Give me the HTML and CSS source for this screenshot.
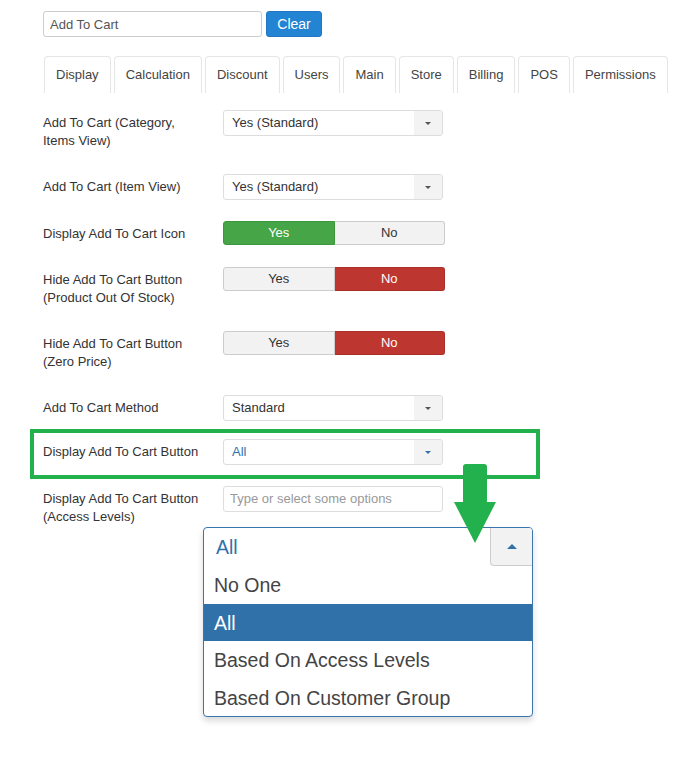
FILE: index.html
```html
<!DOCTYPE html>
<html lang="en">
<head>
  <meta charset="UTF-8">
  <meta name="viewport" content="width=device-width, initial-scale=1.0">
  <title>Add To Cart Options</title>
  <link rel="stylesheet" href="styles.css">
</head>

<body>
  <div class="page">
    <div class="search">
      <input class="search-input" type="text" value="Add To Cart">
      <button class="btn-clear">Clear</button>
    </div>

    <ul class="tabs">
      <li>Display</li>
      <li>Calculation</li>
      <li>Discount</li>
      <li>Users</li>
      <li>Main</li>
      <li>Store</li>
      <li>Billing</li>
      <li>POS</li>
      <li>Permissions</li>
    </ul>

    <div class="form">
      <div class="row">
        <div class="label">Add To Cart (Category,<br>Items View)</div>
        <div class="select"><span>Yes (Standard)</span><span class="select-arrow"><i class="caret"></i></span></div>
      </div>

      <div class="row">
        <div class="label">Add To Cart (Item View)</div>
        <div class="select"><span>Yes (Standard)</span><span class="select-arrow"><i class="caret"></i></span></div>
      </div>

      <div class="row">
        <div class="label">Display Add To Cart Icon</div>
        <div class="toggle">
          <span class="yes-on">Yes</span>
          <span class="off">No</span>
        </div>
      </div>

      <div class="row">
        <div class="label">Hide Add To Cart Button<br>(Product Out Of Stock)</div>
        <div class="toggle">
          <span class="off">Yes</span>
          <span class="no-on">No</span>
        </div>
      </div>

      <div class="row">
        <div class="label">Hide Add To Cart Button<br>(Zero Price)</div>
        <div class="toggle">
          <span class="off">Yes</span>
          <span class="no-on">No</span>
        </div>
      </div>

      <div class="row row-tight">
        <div class="label">Add To Cart Method</div>
        <div class="select"><span>Standard</span><span class="select-arrow"><i class="caret"></i></span></div>
      </div>

      <div class="row highlight">
        <div class="label">Display Add To Cart Button</div>
        <div class="select active"><span>All</span><span class="select-arrow"><i class="caret"></i></span></div>
      </div>

      <div class="row">
        <div class="label">Display Add To Cart Button<br>(Access Levels)</div>
        <div class="multi">Type or select some options</div>
      </div>
    </div>

    <!-- enlarged view of the open dropdown -->
    <div class="dropdown">
      <div class="dropdown-head">
        <span>All</span>
        <span class="dropdown-btn"><i class="caret-up"></i></span>
      </div>
      <ul class="dropdown-list">
        <li>No One</li>
        <li class="selected">All</li>
        <li>Based On Access Levels</li>
        <li>Based On Customer Group</li>
      </ul>
    </div>

    <svg class="pointer" width="50" height="90" viewBox="0 0 50 90">
      <rect x="13" y="4" width="24" height="40" rx="3" fill="#22b14c"/>
      <polygon points="4,42 46,42 25,83" fill="#22b14c"/>
    </svg>
  </div>
</body>
</html>
```

FILE: styles.css
```css
body {
  margin: 0;
  font-family: "Liberation Sans", Arial, sans-serif;
  font-size: 13px;
  color: #333;
  background: #fff;
}

.page {
  position: relative;
  width: 689px;
  height: 770px;
  padding: 11px 0 0 43px;
  box-sizing: border-box;
}

.search {
  display: flex;
  gap: 4px;
}

.search-input {
  width: 219px;
  height: 26px;
  box-sizing: border-box;
  padding: 0 6px;
  border: 1px solid #ccc;
  border-radius: 3px;
  font-family: inherit;
  font-size: 13px;
  color: #555;
}

.btn-clear {
  width: 56px;
  height: 26px;
  padding: 0;
  border: 1px solid #1f78c1;
  border-radius: 3px;
  background: #2384d3;
  color: #fff;
  font-family: inherit;
  font-size: 14px;
}

.tabs {
  display: flex;
  list-style: none;
  margin: 19px 0 0 1px;
  padding: 0;
}

.tabs li {
  height: 36px;
  line-height: 36px;
  padding: 0 11px;
  margin-right: 3px;
  border: 1px solid #e6e6e6;
  border-bottom: none;
  border-radius: 4px 4px 0 0;
  color: #444;
}

.form {
  margin-top: 17px;
}

.row {
  display: flex;
  align-items: flex-start;
  margin-bottom: 21px;
}

.row-tight {
  margin-bottom: 8px;
}

.label {
  width: 180px;
  padding: 4px 0 3px;
  line-height: 18px;
}

.select {
  display: flex;
  width: 220px;
  height: 26px;
  box-sizing: border-box;
  border: 1px solid #ddd;
  border-radius: 3px;
  line-height: 24px;
  overflow: hidden;
}

.select span:first-child {
  flex: 1;
  padding-left: 8px;
}

.select-arrow {
  width: 28px;
  background: #f3f3f3;
  display: flex;
  align-items: center;
  justify-content: center;
}

.caret {
  border-left: 3.5px solid transparent;
  border-right: 3.5px solid transparent;
  border-top: 3.5px solid #555;
}

.select.active span:first-child {
  color: #3071a9;
}

.select.active .caret {
  border-top-color: #3071a9;
}

.toggle {
  display: flex;
  width: 222px;
  height: 24px;
  line-height: 22px;
  text-align: center;
}

.toggle span {
  flex: 1;
  border: 1px solid #ccc;
}

.toggle span:first-child {
  border-radius: 3px 0 0 3px;
}

.toggle span:last-child {
  border-radius: 0 3px 3px 0;
  border-left: none;
}

.toggle .off {
  background: #f2f2f2;
  color: #333;
}

.toggle .yes-on {
  background: #46a546;
  border-color: #3d953e;
  color: #fff;
}

.toggle .no-on {
  background: #bd362f;
  border-color: #a9302a;
  color: #fff;
}

.highlight {
  width: 510px;
  box-sizing: border-box;
  margin: 0 0 7px -13px;
  padding: 6px 9px 10px;
  border: 4px solid #22b14c;
}

.multi {
  width: 220px;
  height: 26px;
  box-sizing: border-box;
  border: 1px solid #ddd;
  border-radius: 3px;
  padding-left: 6px;
  line-height: 24px;
  color: #999;
}

.dropdown {
  position: absolute;
  left: 203px;
  top: 527px;
  width: 330px;
  box-sizing: border-box;
  border: 1px solid #3a76ad;
  border-radius: 4px;
  background: #fff;
  box-shadow: 0 4px 6px rgba(0, 0, 0, 0.15);
  font-size: 19.5px;
  color: #444;
  overflow: hidden;
}

.dropdown-head {
  position: relative;
  height: 38px;
  line-height: 39px;
  padding-left: 12px;
  color: #3071a9;
}

.dropdown-btn {
  position: absolute;
  top: 0;
  right: 0;
  width: 42px;
  height: 38px;
  box-sizing: border-box;
  background: #f2f2f2;
  border-left: 1px solid #ccc;
  border-bottom: 1px solid #ccc;
  border-radius: 0 0 0 4px;
  display: flex;
  align-items: center;
  justify-content: center;
}

.caret-up {
  border-left: 5px solid transparent;
  border-right: 5px solid transparent;
  border-bottom: 5px solid #3071a9;
}

.dropdown-list {
  list-style: none;
  margin: 0;
  padding: 0;
}

.dropdown-list li {
  height: 37.5px;
  line-height: 39px;
  padding-left: 10px;
}

.dropdown-list li.selected {
  background: #3071a9;
  color: #fff;
}

.pointer {
  position: absolute;
  left: 450px;
  top: 460px;
  z-index: 2;
}
```
